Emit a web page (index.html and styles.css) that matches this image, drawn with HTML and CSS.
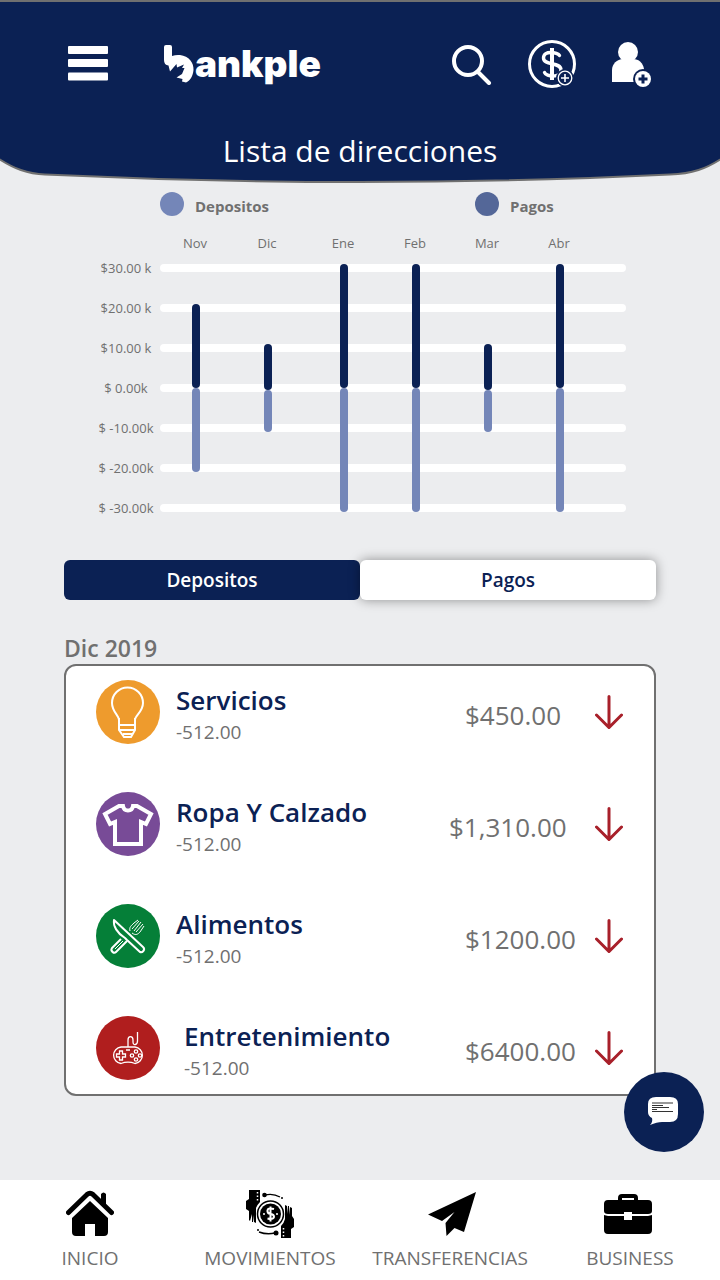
FILE: index.html
```html
<!DOCTYPE html>
<html lang="es">
<head>
<meta charset="utf-8">
<meta name="viewport" content="width=device-width, initial-scale=1">
<title>Bankple - Lista de direcciones</title>
<link rel="stylesheet" href="styles.css">
</head>
<body>
<div class="app">
  <header class="header">
    <svg class="header-shape" viewBox="0 0 720 186" preserveAspectRatio="none" aria-hidden="true">
      <path d="M-4 1H724V157C706 169 692 174 670 174.500C560 180 460 182 360 182C260 182 160 180 45 174.500C28 174 14 169 -4 157Z" fill="#0b2154" stroke="#707070" stroke-width="2"/>
    </svg>
    <div class="toolbar">
      <button class="icon-button" type="button" aria-label="Menú">
        <svg width="40" height="36" viewBox="0 0 40 36" fill="#fff"><rect y="0" width="40" height="8" rx="1"/><rect y="13" width="40" height="8" rx="1"/><rect y="26.500" width="40" height="8" rx="1"/></svg>
      </button>
      <a class="logo" href="#" aria-label="bankple">
        <svg class="logo-mark" width="30" height="38" viewBox="0 0 30 38" fill="#fff"><path d="M0 2Q0 0 2 0H6Q8 0 8 2V11Q12 9.500 16 10C25 11 30 18 29.500 25C29 31 26 36 22 37.500L18 36.500L18.500 34L12.500 32.500L18 29L20.500 23L18 23L20 19.500L13 22.500L12.500 19L6 26.500L4.500 20.500Q0 20 0 15Z"/></svg>
        <span class="logo-text">ankple</span>
      </a>
      <div class="actions">
        <button class="icon-button" type="button" aria-label="Buscar">
          <svg width="40" height="42" viewBox="0 0 40 42" fill="none" stroke="#fff" stroke-width="4"><circle cx="16" cy="18" r="14"/><path d="M26 29L37 40" stroke-linecap="round"/></svg>
        </button>
        <button class="icon-button" type="button" aria-label="Agregar dinero">
          <svg width="48" height="48" viewBox="0 0 48 48" fill="none" stroke="#fff"><circle cx="24" cy="24" r="22.500" stroke-width="3"/><path d="M24 8V40" stroke-width="4"/><path d="M31.500 15.500C30 12.500 15.500 9.500 15.500 18C15.500 26 33 21.500 33 30C33 38.500 18 37 16.500 32.500" stroke-width="3.400" stroke-linecap="round"/><circle cx="37" cy="38" r="8.500" fill="#0b2154" stroke="#0b2154"/><circle cx="37" cy="38" r="6.800" stroke-width="1.300"/><path d="M33 38H41M37 34V42" stroke-width="1.600"/></svg>
        </button>
        <button class="icon-button" type="button" aria-label="Agregar usuario">
          <svg width="40" height="46" viewBox="0 0 40 46" fill="#fff"><circle cx="16" cy="11" r="10"/><path d="M0 41V29C0 23 5 18 11 18H21C27 18 31 22 32 28V41Z"/><circle cx="31" cy="38" r="10" fill="#0b2154"/><circle cx="31" cy="38" r="8"/><path d="M26.500 38H35.500M31 33.500V42.500" stroke="#0b2154" stroke-width="3"/></svg>
        </button>
      </div>
    </div>
    <h1 class="title">Lista de direcciones</h1>
  </header>

  <main class="main">
    <section class="chart" aria-label="Depositos y pagos por mes">
      <div class="legend">
        <span class="legend-item"><i class="dot dot-deposits"></i><span class="legend-label">Depositos</span></span>
        <span class="legend-item"><i class="dot dot-payments"></i><span class="legend-label">Pagos</span></span>
      </div>
      <div class="months">
        <span>Nov</span><span>Dic</span><span>Ene</span><span>Feb</span><span>Mar</span><span>Abr</span>
      </div>
      <div class="plot">
        <div class="scale">
          <div class="scale-row"><span>$30.00 k</span><i></i></div>
          <div class="scale-row"><span>$20.00 k</span><i></i></div>
          <div class="scale-row"><span>$10.00 k</span><i></i></div>
          <div class="scale-row"><span>$ 0.00k</span><i></i></div>
          <div class="scale-row"><span>$ -10.00k</span><i></i></div>
          <div class="scale-row"><span>$ -20.00k</span><i></i></div>
          <div class="scale-row"><span>$ -30.00k</span><i></i></div>
        </div>
        <div class="bars">
          <div class="bar"><i class="up" style="height:84px"></i><i class="down" style="height:84px"></i></div>
          <div class="bar"><i class="up" style="height:46px"></i><i class="down" style="height:42px"></i></div>
          <div class="bar"><i class="up" style="height:124px"></i><i class="down" style="height:124px"></i></div>
          <div class="bar"><i class="up" style="height:124px"></i><i class="down" style="height:124px"></i></div>
          <div class="bar"><i class="up" style="height:46px"></i><i class="down" style="height:42px"></i></div>
          <div class="bar"><i class="up" style="height:124px"></i><i class="down" style="height:124px"></i></div>
        </div>
      </div>
    </section>

    <div class="tabs">
      <button class="tab tab-active" type="button">Depositos</button>
      <button class="tab" type="button">Pagos</button>
    </div>

    <section class="history">
      <h2 class="period">Dic 2019</h2>
      <ul class="list">
        <li class="row">
          <span class="badge badge-services"><svg width="64" height="64" viewBox="0 0 64 64" fill="none" stroke="#fff" stroke-width="2"><path d="M23 45V40C23 35 16 32 16 23A15.500 15.500 0 0 1 47 23C47 32 39 35 39 40V45M23 38V50L28 57H35L39 50V38M23 45H39M24 50H39M27 54H36"/></svg></span>
          <div class="info"><h3 class="name">Servicios</h3><p class="detail">-512.00</p></div>
          <span class="amount">$450.00</span>
          <svg class="arrow" width="28" height="34" viewBox="0 0 28 34"><path d="M14 1.500V32M1.500 20L14 32.500L26.500 20"/></svg>
        </li>
        <li class="row">
          <span class="badge badge-clothes"><svg width="64" height="64" viewBox="0 0 64 64" fill="none" stroke="#fff" stroke-width="4"><path d="M23 14L9 22L14 32L19 30V52H45V30L50 32L55 22L41 14H37C36 20 28 20 27 14Z"/></svg></span>
          <div class="info"><h3 class="name">Ropa Y Calzado</h3><p class="detail">-512.00</p></div>
          <span class="amount amount-wide">$1,310.00</span>
          <svg class="arrow" width="28" height="34" viewBox="0 0 28 34"><path d="M14 1.500V32M1.500 20L14 32.500L26.500 20"/></svg>
        </li>
        <li class="row">
          <span class="badge badge-food"><svg width="64" height="64" viewBox="0 0 64 64" fill="none" stroke="#fff" stroke-width="2" stroke-linejoin="round"><path d="M18 16C17 22 21 29 29 34L31 36L44 48C46 49 50 46 47 43Z"/><path d="M25 35L16 44C14 47 18 50 20 48L31 37"/><path d="M19 45L27 37" stroke-width="1"/><path d="M34 27C33 23 35 22 38 19L42 16M36 29C40 32 42 30 44 28L48 22M36 25L43 17M38 27L45 18M40 28L47 20" stroke-width="1"/></svg></span>
          <div class="info"><h3 class="name">Alimentos</h3><p class="detail">-512.00</p></div>
          <span class="amount">$1200.00</span>
          <svg class="arrow" width="28" height="34" viewBox="0 0 28 34"><path d="M14 1.500V32M1.500 20L14 32.500L26.500 20"/></svg>
        </li>
        <li class="row">
          <span class="badge badge-games"><svg width="64" height="64" viewBox="0 0 64 64" fill="none" stroke="#fff" stroke-width="1.300"><path d="M25 31H39A8.300 8.300 0 0 1 39 47.500C35 46 29 46 25 47.500A8.300 8.300 0 0 1 25 31Z"/><path d="M32 31V24C32 19.500 37 19.500 37 24V26C37 30 41.500 29 41.500 25V16M30 34H34"/><path d="M23.500 35H26.500V38H29.500V41H26.500V44H23.500V41H20.500V38H23.500Z"/><circle cx="40" cy="35.500" r="1.700"/><circle cx="40" cy="43.500" r="1.700"/><circle cx="36" cy="39.500" r="1.700"/><circle cx="44" cy="39.500" r="1.700"/></svg></span>
          <div class="info info-indent"><h3 class="name">Entretenimiento</h3><p class="detail">-512.00</p></div>
          <span class="amount">$6400.00</span>
          <svg class="arrow" width="28" height="34" viewBox="0 0 28 34"><path d="M14 1.500V32M1.500 20L14 32.500L26.500 20"/></svg>
        </li>
      </ul>
    </section>
  </main>

  <button class="chat" type="button" aria-label="Chat">
    <svg width="32" height="32" viewBox="0 0 32 32"><path d="M8 1H22Q30 1 30 8V18Q30 26 22 26H14Q9 26 2 29Q5 26 4 22Q0 20 0 16V8Q0 1 8 1Z" fill="#fff"/><path d="M4 7H25M4 9.500H15M4 11.500H21M4 13.500H9M4 15.500H25" stroke="#333" stroke-width="1.200"/></svg>
  </button>

  <nav class="nav">
    <a class="nav-item" href="#">
      <svg width="48" height="48" viewBox="0 0 48 48"><path d="M2.500 24.500L21 6.500Q24 4 27 6.500L45.500 24.500" transform="translate(0 -2)" fill="none" stroke="#000" stroke-width="5" stroke-linecap="round"/><path d="M35 4Q37.500 1 40 4V17L35 12ZM24 11L42 28V42Q42 46 38 46H29V34H19V46H10Q6 46 6 42V28Z"/></svg>
      <span>INICIO</span>
    </a>
    <a class="nav-item" href="#">
      <svg width="48" height="48" viewBox="0 0 48 48"><path d="M3 0H14V12Q11 15 10 18V33L8 32V25L7 32H6V24L4 31L3 30V21L0 19V11L3 9ZM45 48H35V36Q38 33 39 29V15L41 16V24L42 16H43V25L44 17L46 18V26L48 29V37L45 39Z"/><g fill="none" stroke="#000"><circle cx="24.500" cy="24" r="13" stroke-width="1.500"/><path d="M19 5Q27 3 34 7M13 42Q21 45 29 43" stroke-width="1.400"/></g><circle cx="24.500" cy="24" r="10.500"/><circle cx="18.500" cy="5" r="2.300"/><circle cx="30" cy="43" r="2.500"/><circle cx="36" cy="8" r="1"/><circle cx="12" cy="40" r="1"/><path d="M28 19Q21 17 21.500 21.500Q22 24 25 24Q28 24.500 28 27Q27 30 21.500 28.500M24.500 16.500V31.500" fill="none" stroke="#fff" stroke-width="2"/><path d="M11.500 2V11M37.500 38V47" stroke="#fff" stroke-width="1.500" stroke-dasharray="1.500 2"/><path d="M17 24H19M30 24H32" stroke="#fff" stroke-width="1.500"/></svg>
      <span>MOVIMIENTOS</span>
    </a>
    <a class="nav-item" href="#">
      <svg width="48" height="48" viewBox="-2 0 48 48" overflow="visible"><path d="M48 2L36 42L26.500 38L18.500 46L17.500 33L26.500 22L14 31L0 24.500Z"/></svg>
      <span>TRANSFERENCIAS</span>
    </a>
    <a class="nav-item" href="#">
      <svg width="48" height="48" viewBox="2 0 48 48" overflow="visible"><path d="M16 12V8Q16 6 18 6H30Q32 6 32 8V12" fill="none" stroke="#000" stroke-width="4"/><path d="M4 10H44Q48 10 48 14V21Q48 24 44 24H28V22H20V24H4Q0 24 0 21V14Q0 10 4 10ZM0 25L4 26H20V30H28V26H44L48 25V40Q48 44 44 44H4Q0 44 0 40Z"/></svg>
      <span>BUSINESS</span>
    </a>
  </nav>
</div>
</body>
</html>
```

FILE: styles.css
```css
:root {
  --navy: #0b2154;
  --gray: #707070;
  --periwinkle: #7486b8;
}

* { box-sizing: border-box; }

body {
  margin: 0;
  background: #ecedef;
  color: var(--gray);
  font-family: "Open Sans", "Noto Sans", sans-serif;
}

h1, h2, h3, p, ul { margin: 0; padding: 0; }
button { border: 0; font: inherit; cursor: pointer; }
a { color: inherit; text-decoration: none; }
svg { display: block; flex: none; }

.app {
  position: relative;
  display: flex;
  flex-direction: column;
  min-height: 100vh;
}

.header {
  position: relative;
  height: 186px;
  padding: 40px 68px 0;
  color: #fff;
}
.header-shape {
  position: absolute;
  top: 0;
  left: 0;
  width: 100%;
  height: 100%;
}
.toolbar {
  position: relative;
  display: flex;
  align-items: center;
  height: 48px;
}
.icon-button {
  padding: 0;
  background: none;
}
.logo {
  display: flex;
  align-items: center;
  gap: 1px;
  margin-left: 56px;
}
.logo-text {
  font: 900 37px/48px Inter, sans-serif;
}
.actions {
  display: flex;
  align-items: center;
  gap: 36px;
  margin-left: auto;
}
.title {
  position: relative;
  margin-top: 41px;
  text-align: center;
  font-size: 30px;
  font-weight: 400;
  line-height: 44px;
}

.main { flex: 1; }

.chart { padding: 6px 94px 0 92px; }
.legend {
  display: flex;
  gap: 206px;
  padding-left: 68px;
}
.legend-item {
  display: flex;
  gap: 11px;
  height: 24px;
  font-size: 15px;
  font-weight: 700;
}
.legend-label { line-height: 28px; }
.dot {
  width: 24px;
  height: 24px;
  border-radius: 50%;
}
.dot-deposits { background: var(--periwinkle); }
.dot-payments { background: #546798; }

.months, .bars {
  display: grid;
  grid-template-columns: 72fr 72fr 80fr 64fr 80fr 64fr 34fr;
}
.months {
  margin: 19px 1px -3px 67px;
  font-size: 13px;
  line-height: 16px;
  text-align: center;
}
.plot { display: grid; }
.scale { grid-area: 1 / 1; }
.scale-row {
  display: flex;
  align-items: center;
  height: 40px;
}
.scale-row span {
  width: 68px;
  font-size: 13px;
  text-align: center;
}
.scale-row i {
  flex: 1;
  height: 8px;
  border-radius: 4px;
  background: #fff;
}
.bars {
  grid-area: 1 / 1;
  margin-left: 68px;
}
.bar {
  display: flex;
  flex-direction: column;
  align-items: center;
  justify-content: center;
}
.bar i {
  width: 8px;
  border-radius: 4px;
}
.up { background: var(--navy); }
.down { background: var(--periwinkle); }

.tabs {
  display: flex;
  margin: 32px 64px 0;
}
.tab {
  flex: 1;
  height: 40px;
  border-radius: 6px;
  background: #fff;
  box-shadow: 0 0 12px rgba(0, 0, 0, .4);
  color: var(--navy);
  font-size: 19px;
  font-weight: 600;
}
.tab-active {
  background: var(--navy);
  box-shadow: none;
  color: #fff;
}

.history { padding: 33px 64px 84px; }
.period {
  font-size: 23px;
  font-weight: 600;
  line-height: 31px;
}
.list {
  display: flex;
  flex-direction: column;
  gap: 48px;
  padding: 14px 30px;
  border: 2px solid var(--gray);
  border-radius: 12px;
  background: #fff;
  list-style: none;
}
.row {
  display: flex;
  align-items: center;
}
.badge {
  width: 64px;
  height: 64px;
  border-radius: 50%;
}
.badge-services { background: #ee9b2d; }
.badge-clothes { background: #784b97; }
.badge-food { background: #057f38; }
.badge-games { background: #b01e1e; }
.info {
  flex: 1;
  padding-left: 16px;
}
.info-indent { padding-left: 24px; }
.name {
  color: var(--navy);
  font-size: 26px;
  font-weight: 600;
  line-height: 40px;
}
.detail {
  font-size: 19px;
  line-height: 24px;
}
.amount {
  width: 146px;
  padding: 6px 0 0 16px;
  font-size: 26px;
  line-height: 36px;
}
.amount-wide { padding-left: 0; }
.arrow {
  margin-right: 1px;
  fill: none;
  stroke: #a8202a;
  stroke-width: 3;
  stroke-linecap: round;
}

.chat {
  position: fixed;
  right: 16px;
  bottom: 128px;
  display: grid;
  place-items: center;
  width: 80px;
  height: 80px;
  border-radius: 50%;
  background: var(--navy);
}

.nav {
  display: grid;
  grid-template-columns: repeat(4, 1fr);
  padding: 10px 0 8px;
  background: #fff;
}
.nav-item {
  display: flex;
  flex-direction: column;
  align-items: center;
  gap: 6px;
  font-size: 19px;
  line-height: 28px;
}
```
